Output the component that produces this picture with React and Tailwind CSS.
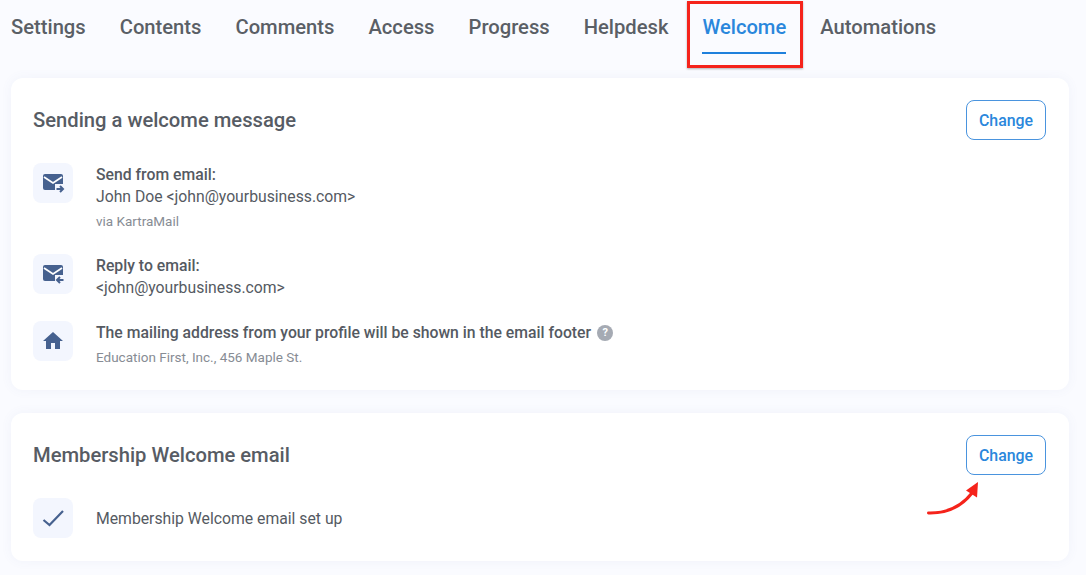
import React from 'react'

const tabs = ['Settings', 'Contents', 'Comments', 'Access', 'Progress', 'Helpdesk', 'Welcome', 'Automations']

const MailOut = () => (
  <svg width="24" height="24" viewBox="0 0 24 24" fill="none">
    <path d="M4 3h16a2 2 0 0 1 2 2v12a2 2 0 0 1-2 2H4a2 2 0 0 1-2-2V5a2 2 0 0 1 2-2z" fill="#46618f" />
    <path d="M3 6l9 6 9-6" stroke="#ffffff" strokeWidth="1.8" />
    <rect x="14" y="13" width="10" height="10" fill="#f3f6fe" />
    <path d="M15.5 18h6.5M19 15l3 3-3 3" stroke="#46618f" strokeWidth="2" />
  </svg>
)

const MailIn = () => (
  <svg width="24" height="24" viewBox="0 0 24 24" fill="none">
    <path d="M4 3h16a2 2 0 0 1 2 2v12a2 2 0 0 1-2 2H4a2 2 0 0 1-2-2V5a2 2 0 0 1 2-2z" fill="#46618f" />
    <path d="M3 6l9 6 9-6" stroke="#ffffff" strokeWidth="1.8" />
    <rect x="14" y="13" width="10" height="10" fill="#f3f6fe" />
    <path d="M22.5 18H16M19 15l-3 3 3 3" stroke="#46618f" strokeWidth="2" />
  </svg>
)

const Home = () => (
  <svg width="24" height="24" viewBox="0 0 24 24" fill="#46618f">
    <path d="M10 20v-6h4v6h5v-8h3L12 3 2 12h3v8z" />
  </svg>
)

const Check = () => (
  <svg width="24" height="24" viewBox="0 0 24 24" fill="none">
    <path d="M2.5 14l6 5L22 5" stroke="#46618f" strokeWidth="2.2" />
  </svg>
)

const IconBox = ({ children }) => (
  <div className="w-10 h-10 shrink-0 rounded-lg bg-[#f3f6fe] flex items-center justify-center">
    {children}
  </div>
)

const ChangeButton = () => (
  <button className="w-20 h-10 pt-px rounded-lg border border-[#4a94de] bg-white text-[15.9px] font-medium text-[#2a87dc]">
    Change
  </button>
)

const CardHeader = ({ title }) => (
  <div className="flex items-center justify-between">
    <h2 className="text-[20.2px] leading-6 font-medium text-[#575c64]">{title}</h2>
    <ChangeButton />
  </div>
)

const Card = ({ children }) => (
  <div className="bg-white rounded-xl pl-[22px] pr-[23px] pt-[22px] pb-[23px] shadow-[0_0_12px_rgba(90,110,170,0.06)]">
    {children}
  </div>
)

const App = () => {
  return (
    <div className="relative w-[1086px] h-[575px] overflow-hidden bg-[#fafbff] font-['Roboto',sans-serif] text-[15.75px] leading-[22px] text-[#555a62]">
      <nav className="flex gap-[34px] pl-[11px] pt-[15px] mb-6">
        {tabs.map((tab) => (
          <div
            key={tab}
            className={
              tab === 'Welcome'
                ? 'text-[20.2px] leading-6 font-medium text-[#2a87dc] pb-[13px] border-b-2 border-[#1e80dc]'
                : 'text-[20.2px] leading-6 font-medium text-[#5a5f66] pb-[13px] border-b-2 border-transparent'
            }
          >
            {tab}
          </div>
        ))}
      </nav>

      <div className="mx-[11px] w-[1058px] flex flex-col gap-[23px]">
        <Card>
          <CardHeader title="Sending a welcome message" />
          <div className="mt-[23px] flex flex-col gap-[23px]">
            <div className="flex gap-[23px]">
              <IconBox><MailOut /></IconBox>
              <div className="pt-px">
                <div className="font-medium">Send from email:</div>
                <div>John Doe &lt;john@yourbusiness.com&gt;</div>
                <div className="mt-1 text-[13.5px] leading-[19px] text-[#878c94]">via KartraMail</div>
              </div>
            </div>
            <div className="flex gap-[23px]">
              <IconBox><MailIn /></IconBox>
              <div className="pt-px -mb-px">
                <div className="font-medium">Reply to email:</div>
                <div>&lt;john@yourbusiness.com&gt;</div>
              </div>
            </div>
            <div className="flex gap-[23px]">
              <IconBox><Home /></IconBox>
              <div className="pt-px">
                <div className="flex items-center gap-[6px] font-medium">
                  The mailing address from your profile will be shown in the email footer
                  <span className="w-4 h-4 rounded-full bg-[#a5aab3] text-white text-[11px] leading-4 font-bold text-center">?</span>
                </div>
                <div className="mt-1 text-[13.5px] leading-[19px] text-[#878c94]">Education First, Inc., 456 Maple St.</div>
              </div>
            </div>
          </div>
        </Card>

        <Card>
          <CardHeader title="Membership Welcome email" />
          <div className="mt-[23px] flex items-center gap-[23px]">
            <IconBox><Check /></IconBox>
            <div className="mt-0.5">Membership Welcome email set up</div>
          </div>
        </Card>
      </div>

      {/* annotations on top of the screenshot */}
      <div className="absolute left-[687px] top-[1px] w-[116px] h-[67px] border-[3px] border-[#f5231b] shadow-[0_1px_2px_rgba(0,0,0,0.3)]" />
      <svg className="absolute left-[920px] top-[475px]" width="70" height="50" viewBox="0 0 70 50" fill="none">
        <path d="M8.5 38C28 38.5 42 31 52 18" stroke="#f5231b" strokeWidth="3" strokeLinecap="round" />
        <path d="M58 7L46 15.5L57 22.5z" fill="#f5231b" />
      </svg>
    </div>
  )
}

export default App
